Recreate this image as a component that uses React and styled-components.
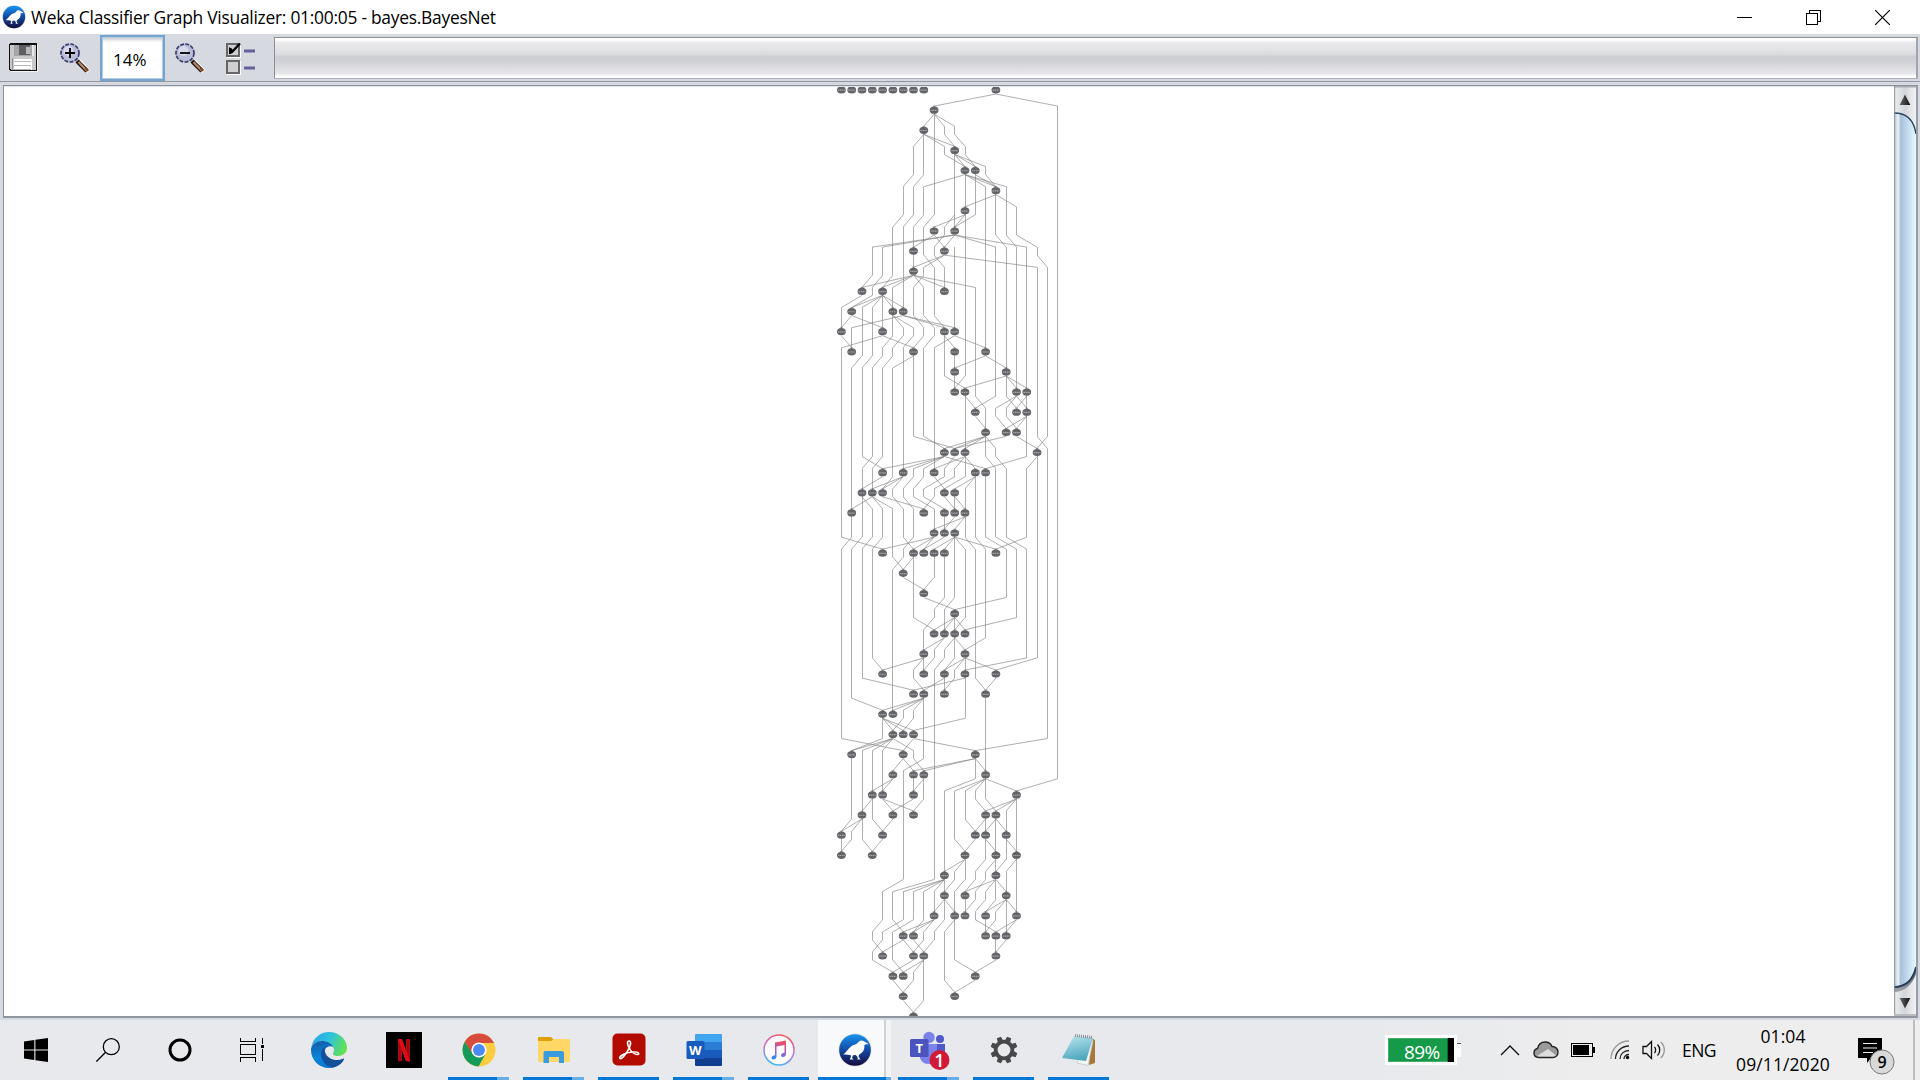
import React from "react";
import styled, { createGlobalStyle } from "styled-components";

const Global = createGlobalStyle`
  * { box-sizing: border-box; }
  body { margin: 0; overflow: hidden; background: #fff; }
`;

const Screen = styled.div`
  width: 1920px;
  height: 1080px;
  display: flex;
  flex-direction: column;
  font-family: "Open Sans", "Noto Sans", sans-serif;
  color: #000;
`;

/* ---------- window chrome ---------- */

const TitleBar = styled.header`
  height: 34px;
  display: flex;
  align-items: center;
  background: #fff;
  padding: 0 2px;
`;

const Title = styled.div`
  margin-left: 5px;
  flex: 1;
  font-size: 17.4px;
  line-height: 35px;
  letter-spacing: ${(p) => p.$tracking}px;
  white-space: nowrap;
`;

const CaptionButton = styled.div`
  width: ${(p) => p.$w || 70}px;
  height: 34px;
  display: flex;
  align-items: center;
  justify-content: center;
`;

const Toolbar = styled.div`
  height: 48px;
  display: flex;
  background: #d6d9df;
  border-bottom: 1px solid #9297a1;
  padding-right: 2px;
`;

const ToolButton = styled.div`
  width: ${(p) => p.$w}px;
  padding: 9px 0 0 ${(p) => p.$pad}px;
`;

const ZoomField = styled.div`
  width: 65px;
  height: 46px;
  margin-top: 1px;
  border: 2px solid #73a4d1;
  background: #fff;
  box-shadow: inset 0 0 0 1px #b9cde0, inset 0 3px 3px #c9ccd2;
  font-size: 17px;
  letter-spacing: 0;
  line-height: 45px;
  padding-left: 11px;
`;

const ProgressTrack = styled.div`
  flex: 1;
  height: 42px;
  margin-top: 3px;
  border: 1px solid #8c8e96;
  border-bottom-color: #adb0b8;
  border-right: 2px solid #a2a5ad;
  background: linear-gradient(#fff 0 2px, #ececee 4px, #dcdde0 16px, #cccdd2 19px, #d2d3d7 24px, #e8e8ec 36px, #fff 38px);
`;

const Viewer = styled.main`
  height: 938px;
  background: #d6d9df;
  padding: 3px 2px 2px 3px;
`;

const Pane = styled.div`
  height: 933px;
  display: flex;
  border: 1px solid #8f949f;
  border-width: 1px 2px 2px 1px;
  border-color: #8c919d #979ca7 #8f949f #8c919d;
  background: #fff;
`;

const Canvas = styled.div`
  flex: 1;
  display: flex;
  justify-content: center;
  overflow: hidden;
  border-top: 1px solid #e1e4e9;
`;

const Scrollbar = styled.div`
  width: 22px;
`;

/* ---------- taskbar ---------- */

const Taskbar = styled.footer`
  height: 60px;
  display: flex;
  background: linear-gradient(90deg, #e8e9ed 0, #e7e9ed 1350px, #ededed 1600px, #eeeeee 100%);
`;

const SystemButton = styled.div`
  flex: none;
  width: 72px;
  height: 60px;
  display: flex;
  align-items: center;
  justify-content: center;
`;

const Apps = styled.nav`
  flex: none;
  margin-left: 3px;
  width: 1094px;
  display: flex;
`;

const AppButton = styled.div`
  flex: none;
  width: 75px;
  height: 60px;
  display: flex;
  flex-direction: column;
  align-items: center;
  padding-left: ${(p) => (p.$active ? 2 : 0)}px;
  background: ${(p) =>
    p.$active
      ? "linear-gradient(90deg, transparent 2px, #f8f9fa 2px 68px, #d0d2d5 68px 70px, #f2f3f5 70px)"
      : "none"};
`;

const AppIcon = styled.div`
  height: 57px;
  display: flex;
  align-items: center;
  padding-top: 3px;
`;

const Underline = styled.div`
  height: 3px;
  width: ${(p) => (p.$active ? 73 : 61)}px;
  background: ${(p) =>
    p.$group
      ? `linear-gradient(90deg, #0078d7 ${p.$active ? 68 : 49}px, #66aee8 ${p.$active ? 68 : 49}px)`
      : "#0078d7"};
`;

const Tray = styled.div`
  flex: none;
  display: flex;
  align-items: center;
  height: 60px;
`;

const BatteryMeter = styled.div`
  width: 72px;
  height: 30px;
  padding: 3px;
  background: #fff;
  display: flex;
`;

const BatteryTip = styled.div`
  width: 4px;
  height: 14px;
  margin-right: 33px;
  background: #fff;
  border-top: 1px solid #555;
`;

const BatteryFill = styled.div`
  width: 61px;
  height: 24px;
  padding-left: 15px;
  background: #169a4a;
  border: 1px solid #45ad6d;
  border-right-color: #0b6a30;
  color: #fff;
  font-size: 19px;
  letter-spacing: -0.6px;
  line-height: 26px;
`;

const BatteryEmpty = styled.div`
  width: 6px;
  height: 24px;
  background: #000;
`;

const TrayItem = styled.div`
  width: ${(p) => p.$w}px;
  height: 60px;
  display: flex;
  align-items: center;
  justify-content: center;
`;

const Language = styled(TrayItem)`
  font-size: 17.5px;
  letter-spacing: -0.5px;
`;

const Clock = styled.div`
  width: 106px;
  height: 60px;
  padding-top: 3px;
  text-align: center;
  font-size: 17.5px;
  line-height: 27.5px;
  letter-spacing: 0.1px;
`;

const Notifications = styled.div`
  width: 79px;
  height: 60px;
  padding-left: 21px;
  border-right: 2px solid #bcbdbf;
`;

/* ---------- network drawing ---------- */

const COL = 10.3;
const ROW = 20.14;

const NODES = [
  "0 1 2 3 4 5 6 7 8 15", "9", "8", "11", "12 13", "15", "12", "9 11", "7 10", "7", "2 4 10", "1 5 6",
  "0 4 10 11", "1 7 11 14", "11 16", "11 12 17 18", "13 17 18", "14 16 17", "10 11 12 19", "4 6 9 13 14",
  "2 3 4 10 11", "1 8 10 11 12", "9 10 11", "4 7 8 9 10 15", "6", "8", "11", "9 10 11 12", "8 12",
  "4 8 10 12 15", "7 8 10 14", "4 5", "5 6 7", "1 6 13", "5 7 8 14", "3 4 7 17", "2 5 7 14 15",
  "0 4 13 14 16", "0 3 12 15 17", "10 15", "10 12 16", "9 11 12 14 17", "6 7 14 15 16", "4 7 8 15",
  "5 6 13", "6 11", "7",
].map((s) => s.split(" ").map(Number));

const LINKS = [
  "15-9 15-21",
  "9-8 9-10 9-11",
  "8-7 8-10 8-11 10-11 11-12",
  "10-12 11-12 11-13 11-14 12-13",
  "7-6 8-7 12-8 12-14 12-16 13-15 12-15 14-15",
  "15-12 15-17",
  "6-5 7-6 8-7 9-8 11-10 12-9 12-11 13-11",
  "9-7 9-10 10-9 11-3 11-4 11-10 11-15 11-18 15-16 16-17 17-19",
  "8-9 9-10 10-7 10-8 10-19 19-20",
  "3-2 4-3 5-4 7-2 7-4 7-5 7-8 7-10 7-13 8-7",
  "2-0 3-1 4-1 4-2 4-3 4-5 4-6",
  "1-0 1-4 5-6 5-7 6-1 6-10 6-11 7-8 8-9 9-10",
  "0-1 4-0 4-7 5-4 6-5 7-6 8-7 9-8 10-11 11-9 11-14",
  "2-1 3-2 4-3 5-4 7-5 14-11 14-16",
  "10-12 12-11 16-12 16-17 16-18",
  "12-13 13-14 15-13 16-17 17-15 17-16 17-18 18-17",
  "13-14 15-16 16-17 18-16 18-17",
  "7-11 8-10 14-10 14-12 14-15 14-11 16-11 17-19 19-20 20-19",
  "2-4 3-2 4-3 10-4 10-6 10-7 10-8 10-14 11-10 12-9 12-11 12-13 18-14 14-15 15-16 19-18",
  "4-2 5-4 6-3 6-4 6-5 7-6 8-7 9-10 10-8 11-9 12-10 13-11 13-12",
  "2-3 3-1 3-4 3-5 4-8 5-6 6-7 7-9 8-10 9-8 10-11 11-12",
  "11-10 12-9 12-11",
  "0-4 1-0 2-1 3-2 4-3 6-7 7-6 9-4 9-7 9-8 10-8 11-9 11-10 11-12 11-15 12-13 13-14 14-16 15-17 16-18 18-15",
  "5-6 6-5 7-6",
  "6-8 9-8",
  "8-11 10-9 11-10 16-11",
  "7-9 9-8 11-9 11-10 11-12 12-11 17-12",
  "10-8 10-9 11-10 11-12 14-12",
  "3-4 8-4 8-7 9-8 10-9 11-10 12-10 12-11 12-15 18-12 19-15",
  "2-7 7-8 10-8 11-10 12-7 13-14 15-14",
  "1-4 8-4 8-5 8-6 8-7",
  "4-5 4-6 4-7 6-5 7-6 12-7",
  "0-6 4-1 5-1 5-2 5-3 5-4 5-7 7-6 7-13 20-13",
  "6-5 6-7 7-8 8-6 13-7 13-8 13-14",
  "5-3 5-4 8-7 13-10 14-11 14-12 14-13 14-17 21-17",
  "3-2 4-5 4-7 7-5 8-7 13-14 14-15 17-14 17-15 17-16",
  "1-0 2-0 2-1 3-4 5-4 12-13 14-13 15-14 15-16",
  "1-0 2-3 4-3 11-12 13-12 14-15 16-17",
  "12-10 12-11 14-13 15-14 16-15 17-16",
  "6-4 9-5 10-6 10-7 10-8 10-9 11-10 12-11 13-12 14-13 15-12 15-14 15-16",
  "10-9 10-11 13-12 14-13 15-14 16-14 16-15 16-17",
  "4-3 5-6 6-4 7-5 8-7 9-6 9-7 9-8 10-9 11-10 13-15 15-14 17-15 17-16",
  "3-4 4-3 6-4 6-7 7-8 8-7 9-8 16-15",
  "3-5 5-6 7-5 8-6 8-7 11-13 15-13",
  "5-6 7-6 10-11 13-11",
  "6-7 8-7",
].map((s) => s.split(" ").map((e) => e.split("-").map(Number)));

const VERTICALS = [
  "11-12 13-22 23-32 37-38",
  "12-13 14-22 23-30 33-36",
  "11-13 14-18 19-22 23-29 33-37",
  "8-9 11-13 14-18 19-20 21-22 23-28 33-36",
  "8-9 10-12 14-18 21-22 31-32 33-35 40-41",
  "7-9 10-12 14-19 21-23 24-31 40-41 42-43",
  "5-6 7-11 13-19 21-22 34-39 40-41",
  "3-4 5-6 7-9 10-11 13-17 21-22 23-26 34-35 40-41",
  "2-4 5-6 7-8 10-11 13-17 27-29 30-33 34-35 40-41 43-45",
  "1-6 9-11 13-19 21-22 23-24 29-39 40-41",
  "9-10 12-14 21-22 23-25 26-27 29-30 35-41 42-44",
  "3-7 8-12 13-15 20-21 22-25 26-28 35-37 40-43",
  "4-14 15-19 20-22 23-26 28-31 35-36 38-39 40-41",
  "4-6 10-15 19-22 23-29 33-34",
  "5-13 16-18 19-22 23-27 30-35 36-38 41-42",
  "5-7 8-15 19-22 36-40 42-43",
  "5-7 8-15 19-22 23-25 36-38 39-42",
  "6-7 8-15 23-26 35-41",
  "8-18 19-22 23-28",
  "9-17 18-28",
  "9-17 18-32",
  "1-34",
].map((s) => s.split(" ").map((e) => e.split("-").map(Number)));

const px = (c) => 7.4 + c * COL;
const py = (r) => 3 + r * ROW;

function Network() {
  const isNode = (c, r) => NODES[r].includes(c);
  const segments = [];
  VERTICALS.forEach((runs, c) =>
    runs.forEach(([a, b]) => {
      const x = Math.floor(px(c)) + 0.5;
      segments.push([x, py(a) + (isNode(c, a) ? 2 : -4), x, py(b) + (isNode(c, b) ? -2 : 4)]);
    })
  );
  LINKS.forEach((list, r) =>
    list.forEach(([a, b]) => {
      segments.push([px(a), py(r) + 4, px(b), py(r + 1) - 4]);
      if (!isNode(a, r)) {
        const x = Math.floor(px(a)) + 0.5;
        const run = VERTICALS[a].some(([s, e]) => s <= r && r <= e);
        if (!run) segments.push([x, py(r) - 4, x, py(r) + 4]);
      }
    })
  );
  return (
    <svg width="230" height="929" viewBox="0 0 230 929">
      <path
        d={segments.map(([a, b, c, d]) => `M${a.toFixed(1)} ${b.toFixed(1)}L${c.toFixed(1)} ${d.toFixed(1)}`).join("")}
        stroke="#7d7d7d"
        strokeWidth="0.62"
        fill="none"
      />
      {NODES.map((cols, r) =>
        cols.map((c) => (
          <g key={`${c}-${r}`} transform={`translate(${px(c)} ${py(r)})`}>
            <path d="M-1.6 -4.4L1.6 -4.4L0 -2Z" fill="#555" opacity={r ? 0.6 : 0} />
            <ellipse rx="4.4" ry="3.6" fill="#636468" />
            <path d="M-3.4 0.2H3.4" stroke="#a4a5a9" strokeWidth="1.2" strokeDasharray="1.5 0.5" />
          </g>
        ))
      )}
    </svg>
  );
}

/* ---------- icons ---------- */

function WekaIcon({ size, id }) {
  return (
    <svg width={size} height={size} viewBox="0 0 34 34">
      <defs>
        <linearGradient id={id} x1="0" y1="0" x2="0" y2="1">
          <stop offset="0" stopColor="#1694f0" />
          <stop offset="0.5" stopColor="#1349a4" />
          <stop offset="1" stopColor="#160b3c" />
        </linearGradient>
      </defs>
      <circle cx="17" cy="17" r="16.5" fill="#d9dce4" />
      <circle cx="17" cy="17" r="15.8" fill={`url(#${id})`} />
      <path
        d="M5.2 21.5C8 20 9.5 16.5 13 13.5C15.5 11.3 18.5 12 20 9.5C21.3 7.3 24 6.8 26 8.2C27.5 9 30 10 30.5 11.6C28.5 11 27.3 11.3 26.3 12C26.8 15.5 25.5 19.3 21.5 21.2L20.5 23.5L22.5 26.6H18.5L20 26L19 23.2L17.6 22L15 22.2L14 25L15.6 26.6H12L13.2 22.5C11.5 21.5 8.5 22 5.2 21.5Z"
        fill="#fff"
      />
    </svg>
  );
}

const SaveIcon = () => (
  <svg width="30" height="30" viewBox="0 0 30 30" shapeRendering="crispEdges">
    <path d="M2 2H29V29H2Z" fill="#f4f4f6" />
    <path d="M1 0H27L28 1V28H1L0 27V1Z" fill="#111" />
    <path d="M1 2H27V27H2L1 26Z" fill="#c9c9cb" />
    <path d="M5 2H23V13H5Z" fill="#a6a6a8" />
    <path d="M10 2H21V12H10Z" fill="#5e5e60" />
    <path d="M17 4H21V11H17Z" fill="#b9b9bb" />
    <path d="M23 2H25V13H23Z" fill="#e8e8e8" />
    <path d="M5 16H23V27H5Z" fill="#fff" />
    <path d="M5 18H22M5 22H22M5 26H22" stroke="#b5b5b7" strokeWidth="1" />
    <path d="M3.5 15V27" stroke="#8c8c8e" />
  </svg>
);

const MagnifierIcon = ({ plus }) => (
  <svg width="32" height="32" viewBox="0 0 32 32">
    <path d="M18 19L21 17L30 27L27 30Z" fill="#fff" />
    <path d="M17 18L27 28" stroke="#1a1210" strokeWidth="4.4" />
    <path d="M18.5 19L27 28" stroke="#b98a6d" strokeWidth="2.2" />
    <path d="M25.5 25L28 28" stroke="#8a4a20" strokeWidth="2.6" />
    <circle cx="10" cy="10" r="9" fill="#b9bdd8" stroke="#3c3c70" strokeWidth="1.7" strokeDasharray="4 1.3" />
    <circle cx="8.5" cy="8" r="5" fill="#d7daea" />
    <path d={plus ? "M5 10H15M10 5V15" : "M5 10H15"} stroke="#000" strokeWidth="1.8" />
  </svg>
);

const ChecksIcon = () => (
  <svg width="30" height="32" viewBox="0 0 30 32">
    <path d="M1 1H15V15H1ZM1 18H15V32H1Z" fill="#fff" />
    <path d="M1 1H13V13H1ZM1 18H13V30H1Z" fill="#cfcfd1" stroke="#666" strokeWidth="2" />
    <path d="M4 5.500L6.500 8.500L14 0.5" stroke="#000" strokeWidth="2.4" fill="none" />
    <path d="M3 4V11H5L8 8Z" fill="#000" />
    <path d="M18 8H29M18 25H29" stroke="#63639c" strokeWidth="3" />
  </svg>
);

const ScrollbarArt = () => (
  <svg width="22" height="930" viewBox="0 0 22 930">
    <defs>
      <linearGradient id="btn">
        <stop offset="0" stopColor="#eceeef" />
        <stop offset="0.5" stopColor="#d3d6d9" />
        <stop offset="1" stopColor="#f2f3f4" />
      </linearGradient>
      <linearGradient id="thumb">
        <stop offset="0" stopColor="#bccbd8" />
        <stop offset="0.2" stopColor="#e9eff5" />
        <stop offset="0.3" stopColor="#a9c0d8" />
        <stop offset="0.55" stopColor="#bdd5ec" />
        <stop offset="1" stopColor="#e2fbfd" />
      </linearGradient>
      <linearGradient id="shade" x1="0" y1="0" x2="0" y2="1">
        <stop offset="0.5" stopColor="#6e747b" />
        <stop offset="1" stopColor="#a2a5a8" />
      </linearGradient>
      <linearGradient id="arrow" x1="0" x2="1">
        <stop offset="0" stopColor="#666" />
        <stop offset="1" stopColor="#111" />
      </linearGradient>
    </defs>
    <path d="M0 0H22V930H0Z" fill="url(#btn)" />
    <path d="M0 0.5H22" stroke="#a9abac" strokeWidth="2" />
    <path d="M11 8.500L16.3 19H5.7Z" fill="url(#arrow)" />
    <path d="M0 906C10 906 18 899 22 888V880H0Z" fill="url(#shade)" />
    <path d="M0 27C12 27 22 34 22 48V881C19 894 12 901 0 901Z" fill="url(#thumb)" />
    <path d="M0 27C12 27 20 34 22 48" stroke="#2c4560" strokeWidth="1.4" fill="none" />
    <path d="M22 881C19 894 12 901 0 901" stroke="#243e5a" strokeWidth="1.8" fill="none" />
    <path d="M11 922.500L16.3 912H5.7Z" fill="url(#arrow)" />
    <path d="M0.7 0V930" stroke="#8d9299" strokeWidth="1" />
    <path d="M0 929H22" stroke="#b9bbbe" strokeWidth="2" />
  </svg>
);

const StartIcon = () => (
  <svg width="24" height="24" viewBox="0 0 24 24">
    <path d="M0 3.4L10.3 2V11.4H0ZM11.4 1.8L24 0V11.4H11.4ZM0 12.5H10.3V22L0 20.6ZM11.4 12.5H24V24L11.4 22.2Z" />
  </svg>
);
const SearchIcon = () => (
  <svg width="24" height="24" viewBox="0 0 24 24" fill="none" stroke="#000" strokeWidth="1.3">
    <circle cx="15.3" cy="8.7" r="8" />
    <path d="M9.6 14.3L0.4 23.6" />
  </svg>
);
const CortanaIcon = () => (
  <svg width="26" height="26" viewBox="0 0 26 26">
    <circle cx="13" cy="13" r="10" fill="none" stroke="#000" strokeWidth="3" />
  </svg>
);
const TaskViewIcon = () => (
  <svg width="24" height="24" viewBox="0 0 24 24" fill="none" stroke="#000" shapeRendering="crispEdges">
    <path d="M0.5 0V3.5H15.5V0M0.5 6.5H15.5V16.5H0.5ZM0.5 24V19.5H15.5V24M22.5 0V6M22.5 11V23" />
    <path d="M21 7H24V10H21Z" fill="#000" stroke="none" />
  </svg>
);

const EdgeIcon = () => (
  <svg width="36" height="36" viewBox="0 0 36 36">
    <defs>
      <linearGradient id="eg1" x1="0" y1="0.2" x2="1" y2="0.5">
        <stop offset="0" stopColor="#27a5e8" />
        <stop offset="0.5" stopColor="#2fc3dc" />
        <stop offset="1" stopColor="#63e34f" />
      </linearGradient>
      <linearGradient id="eg2" x1="0.2" y1="0" x2="0.4" y2="1">
        <stop offset="0" stopColor="#125da8" />
        <stop offset="0.6" stopColor="#0a84dc" />
        <stop offset="1" stopColor="#0a78d0" />
      </linearGradient>
    </defs>
    <path d="M0.4 15C2 6 9.5 0 18 0C28.500 0 36 8 36 15.500C36 21 32 24 27 24C23.500 24 21.500 22.700 22 21.500C24 18 23 14 18 11C10 7 2 10 0.400 15Z" fill="url(#eg1)" />
    <path d="M0 18C0 12 6 8.500 12 9C17 9.500 21 12 22.500 15C20 13.500 15 14 14 18C13 24 18 30 26 30C29 30 31.500 28.500 33 27C30 33 24 36 18 36C8 36 0 28 0 18Z" fill="url(#eg2)" />
    <path d="M13.500 15C9.500 18 9 24 12 29C14.500 33 18 35.500 22 35.500C27 34.500 31 31.500 33 27.300C33.300 26.500 32.500 26.300 32 26.700C25 30 16.500 27 14.200 20.500C13.500 18.500 13.600 16.500 13.500 15Z" fill="#12509a" />
  </svg>
);

const NetflixIcon = () => (
  <svg width="36" height="36" viewBox="0 0 36 36">
    <path d="M0 0H36V36H0Z" />
    <path d="M12 7H16V29L12 29.500ZM20 7H24V29.500L20 29Z" fill="#a9070f" />
    <path d="M12 7H16L24 29.500L19.800 29Z" fill="#e50914" />
  </svg>
);

const ChromeIcon = () => (
  <svg width="34" height="34" viewBox="0 0 34 34">
    <circle cx="17" cy="17" r="16.500" fill="#fccc3f" />
    <path d="M2.700 8.800A16.500 16.500 0 0 1 31.300 8.800L32 10H17L10 21Z" fill="#d84c3e" />
    <path d="M2.700 8.800A16.500 16.500 0 0 0 16.500 33.500L23.300 21.500L17 24.500L10.300 20.500Z" fill="#159b59" />
    <circle cx="17" cy="17" r="7.600" fill="#fff" />
    <circle cx="17" cy="17" r="6" fill="#4a8af4" />
  </svg>
);

const ExplorerIcon = () => (
  <svg width="32" height="28" viewBox="0 0 32 28">
    <path d="M0 2Q0 1 1 1H13L15 3V8H0Z" fill="#dfa000" />
    <path d="M0 5H13L16 3H31Q32 3 32 4V25Q32 26 31 26H1Q0 26 0 25Z" fill="#ffd766" />
    <path d="M5.500 27V17Q5.500 15 7.500 15H24Q26 15 26 17V27H21V21H11V27Z" fill="#3c9be0" />
  </svg>
);

const AcrobatIcon = () => (
  <svg width="34" height="34" viewBox="0 0 34 34">
    <rect x="0.500" y="0.500" width="33" height="32" rx="5" fill="#b30b00" />
    <path
      d="M17 8C15 8 15.200 11 16.700 14C18.500 18 22 21.500 25 21.500C27.500 21.500 27.300 19 23.500 19C18 18.800 13 20 9.500 22.500C7 24.300 7.500 26 9 25.500C12 24.500 18 15 18.500 11C18.700 9 18.300 8 17 8Z"
      fill="none" stroke="#fff" strokeWidth="1.700"
    />
  </svg>
);

const AppLetter = styled.text`
  font-family: "Open Sans", sans-serif;
  font-weight: ${(p) => p.$weight || 700};
  font-size: ${(p) => p.$size}px;
  fill: #fff;
  text-anchor: middle;
`;

const WordIcon = () => (
  <svg width="36" height="34" viewBox="0 0 36 34">
    <path d="M9 2Q9 1 10 1H35Q36 1 36 2V9H9Z" fill="#41a5ee" />
    <path d="M9 9H36V17H9Z" fill="#2b7cd3" />
    <path d="M9 17H36V25H9Z" fill="#185abd" />
    <path d="M9 25H36V32Q36 33 35 33H10Q9 33 9 32Z" fill="#103f91" />
    <rect x="0.500" y="8" width="18" height="18" rx="1.500" fill="#185abd" />
    <AppLetter x="9.300" y="21.500" $size={13}>W</AppLetter>
  </svg>
);

const MusicIcon = () => (
  <svg width="32" height="32" viewBox="0 0 32 32">
    <defs>
      <linearGradient id="ring" x1="0.700" y1="0" x2="0.400" y2="1">
        <stop offset="0" stopColor="#f4565c" />
        <stop offset="0.500" stopColor="#c273d8" />
        <stop offset="1" stopColor="#42b8f0" />
      </linearGradient>
      <linearGradient id="note" x1="0.600" y1="0" x2="0.300" y2="1">
        <stop offset="0" stopColor="#f5505c" />
        <stop offset="0.500" stopColor="#a45bc8" />
        <stop offset="1" stopColor="#2b8ef0" />
      </linearGradient>
    </defs>
    <circle cx="16" cy="16" r="15" fill="#fcfafc" stroke="url(#ring)" strokeWidth="1.500" />
    <path d="M12 8.500L23 6.500V20C23 22.500 20.500 23.500 19 22.800C17 21.500 18.500 19 21.500 18.800V11L13.500 12.500V22.500C13.500 25 11 26 9.500 25.200C7.500 24 9 21.300 12 21.200Z" fill="url(#note)" />
  </svg>
);

const TeamsIcon = () => (
  <svg width="44" height="40" viewBox="-2 0 44 40">
    <circle cx="20" cy="7.500" r="5.700" fill="#7b83eb" />
    <circle cx="31" cy="9" r="4" fill="#5059c9" />
    <path d="M25 14H36V25Q36 30 31 30H25Z" fill="#5059c9" />
    <path d="M11 14H28V26Q28 34 20 34Q13 34 11 28Z" fill="#7b83eb" />
    <rect x="1" y="9" width="18.500" height="18" rx="1.500" fill="#4b53bc" />
    <AppLetter x="10.300" y="22.500" $size={13}>T</AppLetter>
    <circle cx="30.500" cy="30" r="10" fill="#d11a38" />
    <AppLetter x="30.500" y="36.500" $size={18} $weight={600}>1</AppLetter>
  </svg>
);

const GearIcon = () => (
  <svg width="28" height="28" viewBox="-14 -14 28 28">
    <circle r="8.300" fill="none" stroke="#46484a" strokeWidth="3.800" />
    {[22.5, 67.5, 112.5, 157.5, 202.5, 247.5, 292.5, 337.5].map((a) => (
      <path key={a} d="M-2.800 -9L-2.200 -13.500H2.200L2.800 -9Z" fill="#46484a" transform={`rotate(${a})`} />
    ))}
  </svg>
);

const NotepadIcon = () => (
  <svg width="34" height="34" viewBox="0 0 34 34">
    <defs>
      <linearGradient id="pad" x1="0" y1="0" x2="0.300" y2="1">
        <stop offset="0" stopColor="#bfe6f0" />
        <stop offset="1" stopColor="#4fa9be" />
      </linearGradient>
    </defs>
    <path d="M29 5L33 7V30L27 32Z" fill="#a8783a" />
    <path d="M29 4L31 8L26 32.500L15 30L22 14Z" fill="#f3f5f6" stroke="#b4bcc0" strokeWidth="0.600" />
    <path d="M12 3L31 5L24 28L0 25Z" fill="url(#pad)" />
    <path d="M13 2.500L31 4.500" stroke="#8c9094" strokeWidth="3" strokeDasharray="1 1" />
  </svg>
);

const ChevronIcon = () => (
  <svg width="20" height="12" viewBox="0 0 20 12"><path d="M1 11L10 2L19 11" fill="none" stroke="#111" strokeWidth="1.400" /></svg>
);
const CloudIcon = () => (
  <svg width="26" height="18" viewBox="0 0 26 18">
    <path d="M6 16.500C2.500 16.500 1 14.500 1 12C1 9.500 2.500 8 4.500 7.500C5.500 3.500 8.500 1 12 1C15.500 1 18 3 19 5.500C22.500 5.500 25 8 25 11C25 14.500 22.500 16.500 20 16.500Z" fill="#9b9b9b" />
    <path d="M4 15L15 8L23 14.500L20 16.500H6Z" fill="#dedede" />
    <path d="M6 16.500C2.500 16.500 1 14.500 1 12C1 9.500 2.500 8 4.500 7.500C5.500 3.500 8.500 1 12 1C15.500 1 18 3 19 5.500C22.500 5.500 25 8 25 11C25 14.500 22.500 16.500 20 16.500Z" fill="none" stroke="#222" strokeWidth="1.400" />
  </svg>
);
const BatteryIcon = () => (
  <svg width="24" height="14" viewBox="0 0 24 14" shapeRendering="crispEdges">
    <path d="M0.500 0.500H21.500V13.500H0.500Z" fill="none" stroke="#000" />
    <path d="M2 2H18V12H2Z" />
    <path d="M22 4H24V10H22Z" />
  </svg>
);
const WifiIcon = () => (
  <svg width="20" height="20" viewBox="0 0 20 20" fill="none" strokeWidth="1.300">
    <path d="M1 19C1 9 9 1 19 1" stroke="#9a9a9a" />
    <path d="M5.500 19C5.500 11.500 11.500 6 19 6M10 19C10 14 14 10.500 19 10.500M14 19C14 16.500 16 14.500 19 14.500" stroke="#222" />
    <circle cx="17.500" cy="17.500" r="1.700" fill="#000" />
  </svg>
);
const VolumeIcon = () => (
  <svg width="24" height="20" viewBox="0 0 24 20" fill="none" stroke="#111" strokeWidth="1.300">
    <path d="M1 6.500H4.500L9.500 1.500V18.500L4.500 13.500H1Z" />
    <path d="M12.500 7C14 8.500 14 11.500 12.500 13M15.500 4.500C18.500 7.500 18.500 12.500 15.500 15.500" />
    <path d="M18.800 2C23.500 6.500 23.500 13.500 18.800 18" stroke="#999" />
  </svg>
);

const CountText = styled.text`
  font-family: "Open Sans", sans-serif;
  font-weight: 600;
  font-size: 16px;
  text-anchor: middle;
`;

const NotificationIcon = () => (
  <svg width="40" height="60" viewBox="0 0 40 60">
    <path d="M1 18H25V38H14L10 43V38H1Z" />
    <path d="M6 23.500H20M6 28H20M6 32.500H16" stroke="#eee" strokeWidth="1.200" />
    <circle cx="25" cy="42" r="12" fill="#d9d9d9" stroke="#777" />
    <CountText x="25" y="47.800">9</CountText>
  </svg>
);

const APPS = [
  { Icon: EdgeIcon },
  { Icon: NetflixIcon },
  { Icon: ChromeIcon, open: true, group: true },
  { Icon: ExplorerIcon, open: true, group: true },
  { Icon: AcrobatIcon, open: true },
  { Icon: WordIcon, open: true, group: true },
  { Icon: MusicIcon, open: true },
  { Icon: () => <WekaIcon size={34} id="wk2" />, open: true, group: true, active: true },
  { Icon: TeamsIcon, open: true, group: true },
  { Icon: GearIcon, open: true },
  { Icon: NotepadIcon, open: true },
];

export default function App() {
  return (
    <Screen>
      <Global />
      <TitleBar>
        <WekaIcon size={24} id="wk1" />
        <Title $tracking={-0.26}>Weka Classifier Graph Visualizer: 01:00:05 - bayes.BayesNet</Title>
        <CaptionButton>
          <svg width="15" height="15" shapeRendering="crispEdges"><path d="M0 7.500H15" stroke="#000" /></svg>
        </CaptionButton>
        <CaptionButton $w={68}>
          <svg width="15" height="15" shapeRendering="crispEdges" fill="none" stroke="#000">
            <path d="M0.500 3.500H11.500V14.500H0.500ZM3.500 3V0.500H14.500V11.500H12" />
          </svg>
        </CaptionButton>
        <CaptionButton $w={71}>
          <svg width="15" height="15"><path d="M0 0L15 15M15 0L0 15" stroke="#000" strokeWidth="1.200" /></svg>
        </CaptionButton>
      </TitleBar>
      <Toolbar>
        <ToolButton $w={60} $pad={9}><SaveIcon /></ToolButton>
        <ToolButton $w={40} $pad={0}><MagnifierIcon plus /></ToolButton>
        <ZoomField>14%</ZoomField>
        <ToolButton $w={61} $pad={10}><MagnifierIcon /></ToolButton>
        <ToolButton $w={48} $pad={0}><ChecksIcon /></ToolButton>
        <ProgressTrack />
      </Toolbar>
      <Viewer>
        <Pane>
          <Canvas><Network /></Canvas>
          <Scrollbar><ScrollbarArt /></Scrollbar>
        </Pane>
      </Viewer>
      <Taskbar>
        <SystemButton><StartIcon /></SystemButton>
        <SystemButton><SearchIcon /></SystemButton>
        <SystemButton><CortanaIcon /></SystemButton>
        <SystemButton><TaskViewIcon /></SystemButton>
        <Apps>
          {APPS.map(({ Icon, open, group, active }, i) => (
            <AppButton key={i} $active={active}>
              <AppIcon><Icon /></AppIcon>
              {open && <Underline $group={group} $active={active} />}
            </AppButton>
          ))}
        </Apps>
        <Tray>
          <BatteryMeter><BatteryFill>89%</BatteryFill><BatteryEmpty /></BatteryMeter>
          <BatteryTip />
          <TrayItem $w={32}><ChevronIcon /></TrayItem>
          <TrayItem $w={40}><CloudIcon /></TrayItem>
          <TrayItem $w={34}><BatteryIcon /></TrayItem>
          <TrayItem $w={40}><WifiIcon /></TrayItem>
          <TrayItem $w={28}><VolumeIcon /></TrayItem>
          <Language $w={62}>ENG</Language>
          <Clock>01:04<br />09/11/2020</Clock>
          <Notifications><NotificationIcon /></Notifications>
        </Tray>
      </Taskbar>
    </Screen>
  );
}
